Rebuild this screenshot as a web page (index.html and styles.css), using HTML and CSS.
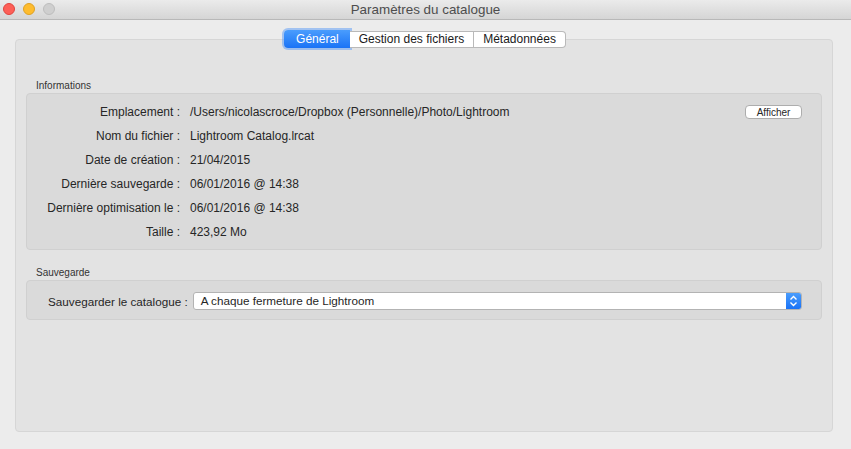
FILE: index.html
```html
<!DOCTYPE html>
<html lang="fr">

<head>
    <meta charset="UTF-8">
    <meta name="viewport" content="width=device-width, initial-scale=1.0">
    <title>Paramètres du catalogue</title>
    <link rel="stylesheet" href="styles.css">
</head>

<body>
    <div class="titlebar">
        <div class="lights">
            <span class="light red"></span>
            <span class="light yellow"></span>
            <span class="light gray"></span>
        </div>
        <div class="title">Paramètres du catalogue</div>
    </div>

    <div class="window">
        <div class="tabview">
            <div class="tabs">
                <div class="tab active">Général</div>
                <div class="tab">Gestion des fichiers</div>
                <div class="tab">Métadonnées</div>
            </div>

            <div class="group-label first">Informations</div>
            <div class="group info">
                <div class="row">
                    <div class="label">Emplacement :</div>
                    <div class="value">/Users/nicolascroce/Dropbox (Personnelle)/Photo/Lightroom</div>
                    <button class="btn">Afficher</button>
                </div>
                <div class="row">
                    <div class="label">Nom du fichier :</div>
                    <div class="value">Lightroom Catalog.lrcat</div>
                </div>
                <div class="row">
                    <div class="label">Date de création :</div>
                    <div class="value">21/04/2015</div>
                </div>
                <div class="row">
                    <div class="label">Dernière sauvegarde :</div>
                    <div class="value">06/01/2016 @ 14:38</div>
                </div>
                <div class="row">
                    <div class="label">Dernière optimisation le :</div>
                    <div class="value">06/01/2016 @ 14:38</div>
                </div>
                <div class="row">
                    <div class="label">Taille :</div>
                    <div class="value">423,92 Mo</div>
                </div>
            </div>

            <div class="group-label">Sauvegarde</div>
            <div class="group backup">
                <div class="backup-label">Sauvegarder le catalogue :</div>
                <div class="select">
                    <span class="select-text">A chaque fermeture de Lightroom</span>
                    <span class="select-arrows">
                        <svg width="9" height="12" viewBox="0 0 9 12">
                            <path d="M1.5 4.5 L4.5 1.5 L7.5 4.5 M1.5 7.5 L4.5 10.5 L7.5 7.5" fill="none" stroke="#fff" stroke-width="1.4"/>
                        </svg>
                    </span>
                </div>
            </div>
        </div>
    </div>
</body>

</html>
```

FILE: styles.css
```css
* {
    margin: 0;
    padding: 0;
    box-sizing: border-box;
}

body {
    width: 851px;
    height: 449px;
    overflow: hidden;
    background-color: #ececec;
    font-family: "Liberation Sans", Arial, sans-serif;
    color: #262626;
}

.titlebar {
    position: relative;
    height: 20px;
    background: linear-gradient(#ebebeb, #d5d5d5);
    border-bottom: 1px solid #b8b8b8;
    display: flex;
    align-items: center;
    justify-content: center;
}

.lights {
    position: absolute;
    left: 3px;
    top: 3px;
    display: flex;
    gap: 8px;
}

.light {
    display: block;
    width: 12px;
    height: 12px;
    border-radius: 50%;
}

.red {
    background-color: #fd5f57;
    border: 1px solid #e0443e;
}

.yellow {
    background-color: #febc2e;
    border: 1px solid #dea123;
}

.gray {
    background-color: #cfcfcf;
    border: 1px solid #bdbdbd;
}

.title {
    font-size: 13.4px;
    color: #4d4d4d;
}

.window {
    padding: 19px 18px 0 15px;
}

.tabview {
    height: 393px;
    background-color: #e3e3e3;
    border: 1px solid #d6d6d6;
    border-radius: 4px;
}

.tabs {
    display: flex;
    justify-content: center;
    margin-top: -9px;
    height: 18px;
    padding-left: 2px;
}

.tab {
    height: 17px;
    line-height: 15px;
    font-size: 12px;
    padding: 0 9px;
    background-color: #fff;
    border: 1px solid #b9b9b9;
    border-left: none;
    color: #1a1a1a;
}

.tab:last-child {
    border-radius: 0 4px 4px 0;
}

.tab.active {
    height: 18px;
    line-height: 18px;
    margin-top: -1px;
    padding: 0 11px 0 12px;
    color: #fff;
    background: linear-gradient(#4a9dfd, #1a73f6);
    border: none;
    border-radius: 4px 0 0 4px;
    box-shadow: 0 0 0 2px rgba(100, 160, 245, 0.55);
}

.group-label {
    font-size: 10px;
    line-height: 14px;
    margin: 16px 0 0 20px;
    color: #333;
}

.group-label.first {
    margin-top: 30px;
}

.group {
    margin: 0 10px;
    background-color: #dadada;
    border: 1px solid #d0d0d0;
    border-radius: 4px;
}

.info {
    padding: 6px 0 5px;
}

.row {
    display: flex;
    align-items: center;
    height: 24px;
    font-size: 12px;
}

.label {
    width: 153px;
    text-align: right;
    margin-right: 10px;
    white-space: nowrap;
}

.btn {
    margin: 0 19px 0 auto;
    width: 57px;
    height: 14px;
    font-family: inherit;
    font-size: 10px;
    color: #262626;
    background-color: #fff;
    border: 1px solid #adadad;
    border-radius: 4px;
}

.backup {
    height: 40px;
    display: flex;
    align-items: center;
    padding: 2px 19px 0 21px;
    font-size: 11.7px;
}

.backup-label {
    margin-right: 5px;
    white-space: nowrap;
}

.select {
    flex: 1;
    height: 18px;
    display: flex;
    background-color: #fff;
    border: 1px solid #b3b3b3;
    border-radius: 3px;
    overflow: hidden;
}

.select-text {
    flex: 1;
    padding-left: 7px;
    line-height: 16px;
}

.select-arrows {
    width: 15px;
    display: flex;
    align-items: center;
    justify-content: center;
    background: linear-gradient(#4a9dfd, #1a73f6);
}
```
